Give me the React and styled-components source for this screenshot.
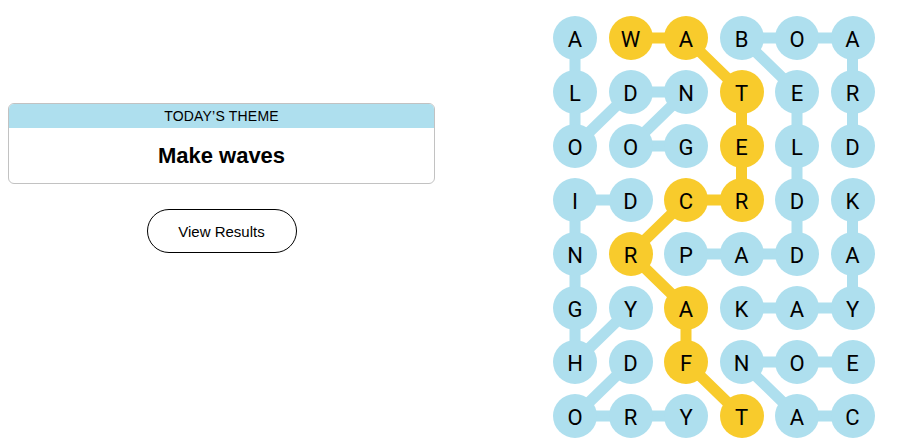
import React from "react";
import styled, { createGlobalStyle } from "styled-components";

const BLUE = "#aedfee";
const YELLOW = "#f8cb2c";
const CELL = 44;
const COL_GAP = 11.5;
const ROW_GAP = 10;
const COLS = 6;
const ROWS = 8;

const GlobalStyle = createGlobalStyle`
  html, body { margin: 0; padding: 0; background: #fff; }
  body { font-family: "Liberation Sans", Arial, sans-serif; color: #000; }
`;

const Page = styled.div`
  display: flex;
  align-items: flex-start;
  gap: 118px;
  padding: 16px 0 0 8px;
  width: 899px;
  height: 448px;
  box-sizing: border-box;
  overflow: hidden;
`;

const LeftColumn = styled.div`
  width: 427px;
  margin-top: 87px;
  display: flex;
  flex-direction: column;
  align-items: center;
  gap: 25px;
`;

const ThemeCard = styled.div`
  width: 100%;
  box-sizing: border-box;
  border: 1px solid #c2c2c2;
  border-radius: 6px;
  overflow: hidden;
`;

const ThemeHeader = styled.div`
  height: 24px;
  background: ${BLUE};
  display: flex;
  align-items: center;
  justify-content: center;
  font-size: 14px;
  letter-spacing: 0.2px;
  text-transform: uppercase;
  color: #000;
`;

const ThemeBody = styled.div`
  height: 55px;
  display: flex;
  align-items: center;
  justify-content: center;
  font-size: 22px;
  font-weight: 700;
`;

const ResultsButton = styled.button`
  width: 150px;
  height: 44px;
  border: 1px solid #000;
  border-radius: 22px;
  background: #fff;
  font-family: "Liberation Sans", Arial, sans-serif;
  font-size: 15px;
  color: #000;
  cursor: pointer;
  padding: 0;
`;

const Board = styled.div`
  position: relative;
  display: grid;
  grid-template-columns: repeat(${COLS}, ${CELL}px);
  grid-auto-rows: ${CELL}px;
  column-gap: ${COL_GAP}px;
  row-gap: ${ROW_GAP}px;
`;

const Links = styled.svg`
  position: absolute;
  inset: 0;
  width: 100%;
  height: 100%;
  overflow: visible;
  z-index: 0;
`;

const Letter = styled.div`
  position: relative;
  z-index: 1;
  width: ${CELL}px;
  height: ${CELL}px;
  border-radius: 50%;
  background: ${(p) => (p.$spangram ? YELLOW : BLUE)};
  display: flex;
  align-items: center;
  justify-content: center;
  font-family: Roboto, "Liberation Sans", sans-serif;
  font-size: 22px;
  padding-top: 2px;
  box-sizing: border-box;
  color: #000;
`;

const GRID = [
  "AWABOA",
  "LDNTER",
  "OOGELD",
  "IDCRDK",
  "NRPADA",
  "GYAKAY",
  "HDFNOE",
  "ORYTAC",
];

const WORDS = [
  { spangram: true, cells: [[0, 1], [0, 2], [1, 3], [2, 3], [3, 3], [3, 2], [4, 1], [5, 2], [6, 2], [7, 3]] },
  { cells: [[2, 2], [2, 1], [1, 2], [1, 1], [2, 0], [1, 0], [0, 0]] },
  { cells: [[4, 2], [4, 3], [4, 4], [3, 4], [2, 4], [1, 4], [0, 3], [0, 4], [0, 5], [1, 5], [2, 5]] },
  { cells: [[3, 5], [4, 5], [5, 5], [5, 4], [5, 3]] },
  { cells: [[3, 1], [3, 0], [4, 0], [5, 0], [6, 0], [5, 1]] },
  { cells: [[6, 1], [7, 0], [7, 1], [7, 2]] },
  { cells: [[7, 5], [7, 4], [6, 3], [6, 4], [6, 5]] },
];

const spanSet = new Set(WORDS[0].cells.map(([r, c]) => `${r}-${c}`));

const cx = (c) => CELL / 2 + c * (CELL + COL_GAP);
const cy = (r) => CELL / 2 + r * (CELL + ROW_GAP);

export default function App() {
  return (
    <>
      <GlobalStyle />
      <Page>
        <LeftColumn>
          <ThemeCard>
            <ThemeHeader>Today’s Theme</ThemeHeader>
            <ThemeBody>Make waves</ThemeBody>
          </ThemeCard>
          <ResultsButton>View Results</ResultsButton>
        </LeftColumn>
        <Board>
          <Links>
            {WORDS.map((w, i) => (
              <polyline
                key={i}
                points={w.cells.map(([r, c]) => `${cx(c)},${cy(r)}`).join(" ")}
                fill="none"
                stroke={w.spangram ? YELLOW : BLUE}
                strokeWidth="11"
                strokeLinejoin="round"
              />
            ))}
          </Links>
          {GRID.map((row, r) =>
            row.split("").map((ch, c) => (
              <Letter key={`${r}-${c}`} $spangram={spanSet.has(`${r}-${c}`)}>
                {ch}
              </Letter>
            ))
          )}
        </Board>
      </Page>
    </>
  );
}
